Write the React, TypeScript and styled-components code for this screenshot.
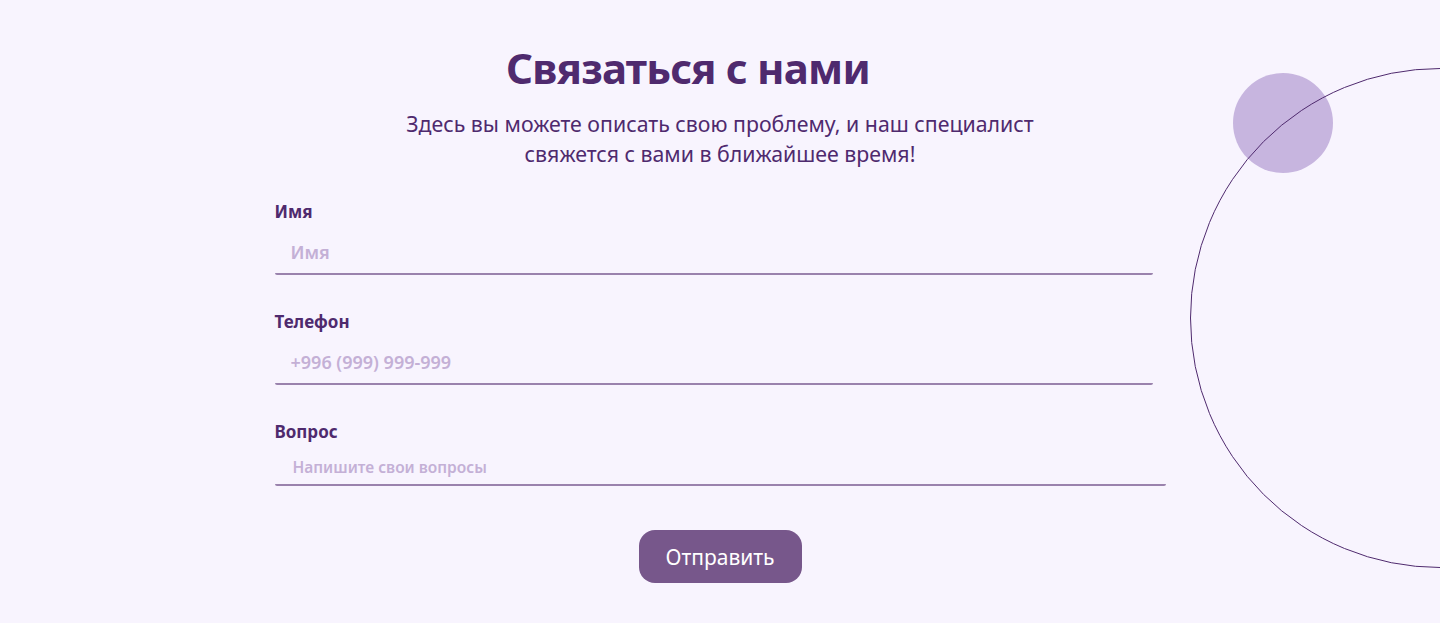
import styled, { createGlobalStyle } from "styled-components";

const GlobalStyle = createGlobalStyle`
    html, body {
        margin: 0;
        padding: 0;
        background: #f8f4fe;
    }
    * {
        box-sizing: border-box;
    }
`;

const Page = styled.section`
    position: relative;
    width: 100%;
    height: 623px;
    overflow: hidden;
    background: #f8f4fe;
    font-family: "Noto Sans", "Open Sans", sans-serif;
    color: #4f2a6e;
`;

const Content = styled.div`
    position: relative;
    z-index: 1;
    display: flex;
    flex-direction: column;
    align-items: center;
    padding-top: 38px;
`;

const Title = styled.h1`
    margin: 0 64px 0 0;
    font-size: 42px;
    font-weight: 700;
    line-height: 60px;
    letter-spacing: -0.8px;
    color: #4f2a6e;
`;

const Subtitle = styled.p`
    margin: 11px 0 0;
    width: 660px;
    font-size: 21.3px;
    line-height: 30px;
    text-align: center;
    color: #4f2a6e;
`;

const Form = styled.form`
    width: 891px;
    margin: 32px 0 0 0;
    display: flex;
    flex-direction: column;
`;

const Field = styled.label<{ $width?: number; $gap?: number }>`
    display: flex;
    flex-direction: column;
    width: ${(p) => p.$width ?? 878}px;
    margin-bottom: ${(p) => p.$gap ?? 36}px;
`;

const Label = styled.span`
    font-size: 17px;
    font-weight: 700;
    line-height: 22px;
    color: #4f2a6e;
`;

const Input = styled.input<{ $small?: boolean }>`
    margin-top: ${(p) => (p.$small ? 14 : 16)}px;
    height: ${(p) => (p.$small ? 29 : 36)}px;
    padding: 0 0 ${(p) => (p.$small ? 8 : 9)}px ${(p) => (p.$small ? 18 : 16)}px;
    border: none;
    border-bottom: 2px solid #9a82ad;
    border-radius: 0 0 2px 2px;
    background: transparent;
    font-family: inherit;
    font-size: ${(p) => (p.$small ? 15.5 : 18)}px;
    font-weight: 600;
    color: #4f2a6e;
    outline: none;

    &::placeholder {
        color: #c4b0d6;
    }
`;

const Submit = styled.button`
    align-self: center;
    margin: 44px 0 0 0;
    width: 163px;
    height: 53px;
    border: none;
    border-radius: 16px;
    background: #77578b;
    color: #ffffff;
    font-family: inherit;
    font-size: 21px;
    cursor: pointer;
`;

const FilledDot = styled.div`
    position: absolute;
    left: 1233px;
    top: 73px;
    width: 100px;
    height: 100px;
    border-radius: 50%;
    background: #c7b5df;
`;

const Ring = styled.div`
    position: absolute;
    left: 1190px;
    top: 68px;
    width: 500px;
    height: 500px;
    border-radius: 50%;
    border: 1px solid #4f2a6e;
`;

export default function App() {
    return (
        <Page>
            <GlobalStyle />
            <FilledDot />
            <Ring />
            <Content>
                <Title>Связаться с нами</Title>
                <Subtitle>
                    Здесь вы можете описать свою проблему, и наш специалист свяжется с вами в ближайшее время!
                </Subtitle>
                <Form onSubmit={(e) => e.preventDefault()}>
                    <Field>
                        <Label>Имя</Label>
                        <Input placeholder="Имя" />
                    </Field>
                    <Field>
                        <Label>Телефон</Label>
                        <Input placeholder="+996 (999) 999-999" />
                    </Field>
                    <Field $width={891} $gap={0}>
                        <Label>Вопрос</Label>
                        <Input $small placeholder="Напишите свои вопросы" />
                    </Field>
                    <Submit type="submit">Отправить</Submit>
                </Form>
            </Content>
        </Page>
    );
}
